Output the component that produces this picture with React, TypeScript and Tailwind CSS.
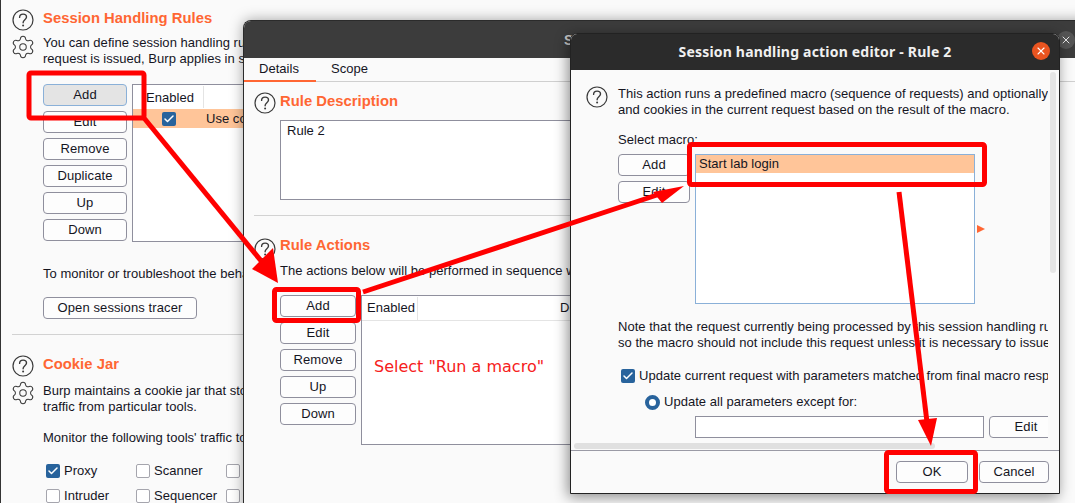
import React from "react";
import { Settings, Check, X } from "lucide-react";

function Help({ className = "" }: { className?: string }) {
  return (
    <svg width="22" height="22" viewBox="0 0 22 22" fill="none" className={`shrink-0 ${className}`}>
      <circle cx="11" cy="11" r="10" stroke="#3a3a3a" strokeWidth="1.2" />
      <path d="M7.6 8.4c0-2 1.5-3.3 3.5-3.3s3.4 1.2 3.4 3c0 2.6-3.4 2.8-3.4 5.6" stroke="#3a3a3a" strokeWidth="1.4" strokeLinecap="round" />
      <circle cx="11.1" cy="16.4" r="1" fill="#3a3a3a" />
    </svg>
  );
}

function Gear() {
  return (
    <div className="w-[21px] h-[22px] flex items-center justify-center">
      <Settings size={26} strokeWidth={0.95} color="#3a3a3a" className="shrink-0" />
    </div>
  );
}

function Btn({ children, className = "" }: { children: React.ReactNode; className?: string }) {
  return (
    <div className={`h-[22px] shrink-0 flex items-center justify-center rounded-[4px] border border-[#8f8f9d] bg-[#fdfdfd] text-[13px] tracking-[0.1px] text-[#15151f] ${className}`}>
      {children}
    </div>
  );
}

function Box({ checked = false }: { checked?: boolean }) {
  return checked ? (
    <div className="w-[14px] h-[14px] shrink-0 rounded-[2px] bg-[#28639c] flex items-center justify-center">
      <Check size={12} strokeWidth={3} color="#ffffff" />
    </div>
  ) : (
    <div className="w-[14px] h-[14px] shrink-0 rounded-[2px] border border-[#a5a5ad] bg-white" />
  );
}

function Title({ children, className = "" }: { children: React.ReactNode; className?: string }) {
  return <div className={`text-[14.8px] leading-[18px] font-bold text-[#ff6633] whitespace-nowrap ${className}`}>{children}</div>;
}

function Tool({ label, checked = false, w = "w-[90px]" }: { label: string; checked?: boolean; w?: string }) {
  return (
    <div className={`flex items-center gap-[4px] ${w}`}>
      <Box checked={checked} />
      <span className="whitespace-nowrap">{label}</span>
    </div>
  );
}

function BackPanel() {
  return (
    <div className="w-[243px] pl-[12px] pt-[9px] whitespace-nowrap text-[13px] tracking-[0.03px] leading-[16px] text-[#15151f]">
      <div className="flex gap-[10px]">
        <div className="flex flex-col gap-[5px] w-[21px]">
          <Help />
          <Gear />
        </div>
        <div className="flex flex-col">
          <Title>Session Handling Rules</Title>
          <div className="mt-[8px]">You can define session handling rules to make Burp perform</div>
          <div>request is issued, Burp applies in sequence each of the rules</div>
          <div className="flex mt-[17px] gap-[5px]">
            <div className="flex flex-col gap-[5px] w-[84px]">
              <Btn className="!bg-[#e4e4e4] !border-[#8ab0d8]">Add</Btn>
              <Btn>Edit</Btn>
              <Btn>Remove</Btn>
              <Btn>Duplicate</Btn>
              <Btn>Up</Btn>
              <Btn>Down</Btn>
            </div>
            <div className="w-[400px] h-[158px] border border-[#8f8f9d] bg-white">
              <div className="h-[24px] flex items-center pl-[13px]">
                <span className="w-[57px] pt-[2px]">Enabled</span>
                <span className="h-[22px] w-px bg-[#e4e4e4]" />
              </div>
              <div className="h-[19px] bg-[#ffc599] flex items-center pl-[29px]">
                <Box checked />
                <span className="ml-[30px]">Use cookies from Burp's cookie jar</span>
              </div>
            </div>
          </div>
          <div className="mt-[24px]">To monitor or troubleshoot the behaviour of your session handling</div>
          <Btn className="w-[154px] mt-[15px]">Open sessions tracer</Btn>
        </div>
      </div>
      <div className="h-px w-[232px] bg-[#d2d2d2] mt-[15px]" />
      <div className="flex gap-[10px] mt-[20px]">
        <div className="flex flex-col gap-[5px] w-[21px]">
          <Help />
          <Gear />
        </div>
        <div className="flex flex-col">
          <Title>Cookie Jar</Title>
          <div className="mt-[10px]">Burp maintains a cookie jar that stores all of the cookies issued by</div>
          <div>traffic from particular tools.</div>
          <div className="mt-[15px]">Monitor the following tools' traffic to update the cookie jar:</div>
          <div className="flex mt-[17px] ml-[3px]">
            <Tool label="Proxy" checked />
            <Tool label="Scanner" />
            <Tool label="Repeater" />
          </div>
          <div className="flex mt-[9px] ml-[3px]">
            <Tool label="Intruder" />
            <Tool label="Sequencer" />
            <Tool label="Extensions" />
          </div>
        </div>
      </div>
    </div>
  );
}

function RuleWindow() {
  return (
    <div className="absolute left-[243px] top-[20px] w-[900px] h-[520px] rounded-t-[8px] border-l border-t border-[#2b2b2b] bg-[#fafafa] shadow-[0_0_14px_rgba(0,0,0,0.35)] text-[13px] tracking-[0.03px] leading-[16px] text-[#15151f] whitespace-nowrap">
      <div className="h-[37px] rounded-t-[7px] bg-[#3c3c3c] flex items-center pl-[320px]">
        <span className="text-[14px] font-bold text-[#c9c9c9]">Session handling rule editor</span>
        <div className="ml-auto mr-[68px] w-[18px] h-[18px] rounded-full bg-[#555555] flex items-center justify-center">
          <X size={12} strokeWidth={2} color="#e8e8e8" />
        </div>
      </div>
      <div className="h-[24px] flex border-b border-[#cfcfcf]">
        <div className="w-[72px] h-[24px] border-b-2 border-[#ff6633] pl-[15px] pt-[3px]">Details</div>
        <div className="pl-[15px] pt-[3px]">Scope</div>
      </div>
      <div className="pl-[10px] flex gap-[4px] mt-[11px]">
        <Help className="mt-[-1px]" />
        <div className="flex flex-col">
          <Title className="mt-[-1px]">Rule Description</Title>
          <div className="w-[500px] h-[80px] mt-[10px] border border-[#8f8f9d] bg-white pl-[6px] pt-[2px]">Rule 2</div>
        </div>
      </div>
      <div className="ml-[10px] h-px w-[800px] bg-[#d2d2d2] mt-[15px]" />
      <div className="pl-[10px] flex gap-[4px] mt-[20px]">
        <Help className="mt-[2px]" />
        <div className="flex flex-col">
          <Title>Rule Actions</Title>
          <div className="mt-[9px]">The actions below will be performed in sequence when this rule is applied</div>
          <div className="flex gap-[5px] mt-[16px]">
            <div className="flex flex-col gap-[5px] w-[76px]">
              <Btn>Add</Btn>
              <Btn>Edit</Btn>
              <Btn>Remove</Btn>
              <Btn>Up</Btn>
              <Btn>Down</Btn>
            </div>
            <div className="relative w-[500px] h-[150px] border border-[#8f8f9d] bg-white">
              <div className="h-[25px] flex items-center pl-[5px] border-b border-[#e4e4e4]">
                <span className="w-[50px]">Enabled</span>
                <span className="h-[23px] w-px bg-[#e4e4e4]" />
                <span className="ml-[142px]">Description</span>
              </div>
              <div className="mt-[36px] ml-[12px] text-[16px] tracking-normal leading-[19px] text-[#f62020] font-['DejaVu_Sans',sans-serif]">Select "Run a macro"</div>
            </div>
          </div>
        </div>
      </div>
    </div>
  );
}

function ActionWindow() {
  return (
    <div className="absolute left-[570px] top-[33px] w-[490px] h-[461px] rounded-t-[7px] border border-[#222222] bg-[#fafafa] shadow-[-2px_3px_14px_rgba(0,0,0,0.45)] flex flex-col text-[13px] tracking-[0.03px] leading-[16px] text-[#15151f] whitespace-nowrap">
      <div className="relative h-[36px] shrink-0 rounded-t-[6px] bg-[#2b2b2b] flex items-center justify-center">
        <span className="text-[14px] font-bold tracking-[0.2px] text-[#f0f0f0] font-['Noto_Sans',sans-serif]">Session handling action editor - Rule 2</span>
        <div className="absolute right-[9px] top-[8px] w-[18px] h-[18px] rounded-full bg-[#e95420] flex items-center justify-center">
          <X size={12} strokeWidth={2.2} color="#ffffff" />
        </div>
      </div>
      <div className="relative h-[380px] shrink-0 overflow-hidden">
        <div className="absolute right-[3px] top-[2px] w-[6px] h-[201px] rounded-[3px] bg-[#e6e6e6]" />
        <div className="absolute left-[3px] bottom-[1px] w-[361px] h-[6px] rounded-[3px] bg-[#e0e0e0]" />
        <div className="w-[477px] overflow-hidden pt-[16px] pl-[15px]">
          <div className="flex gap-[10px]">
            <Help />
            <div className="flex flex-col">
              <div>This action runs a predefined macro (sequence of requests) and optionally update parameters</div>
              <div>and cookies in the current request based on the result of the macro.</div>
              <div className="mt-[14px]">Select macro:</div>
              <div className="flex gap-[5px] mt-[6px] relative">
                <div className="flex flex-col gap-[5px] w-[72px]">
                  <Btn>Add</Btn>
                  <Btn>Edit</Btn>
                </div>
                <div className="w-[280px] h-[150px] border border-[#8ab0d8] bg-white">
                  <div className="h-[18px] bg-[#ffc599] pl-[3px] flex items-center">Start lab login</div>
                </div>
                <div className="self-center ml-[-3px] w-0 h-0 border-y-[4px] border-y-transparent border-l-[8px] border-l-[#ff6633]" />
              </div>
              <div className="mt-[15px]">Note that the request currently being processed by this session handling rule will be issued,</div>
              <div>so the macro should not include this request unless it is necessary to issue it again</div>
              <div className="flex items-center gap-[4px] mt-[17px] ml-[3px]">
                <Box checked />
                <span>Update current request with parameters matched from final macro response</span>
              </div>
              <div className="flex items-center gap-[4px] mt-[10px] ml-[27px]">
                <div className="w-[15px] h-[15px] rounded-full border-[4px] border-[#28639c] bg-white" />
                <span>Update all parameters except for:</span>
              </div>
              <div className="flex gap-[5px] mt-[6px] ml-[77px]">
                <div className="w-[289px] h-[22px] shrink-0 border border-[#8f8f9d] bg-white" />
                <Btn className="w-[74px]">Edit</Btn>
              </div>
            </div>
          </div>
        </div>
      </div>
      <div className="flex-1 border-t border-[#9a9aa5] flex items-center justify-end pr-[10px] gap-[11px]">
        <Btn className="w-[72px]">OK</Btn>
        <Btn className="w-[70px]">Cancel</Btn>
      </div>
    </div>
  );
}

function Annotations() {
  const red = "#ff0000";
  return (
    <svg className="absolute inset-0" width="1075" height="503" viewBox="0 0 1075 503" fill="none">
      <g stroke={red} strokeWidth="5" strokeLinejoin="round">
        <rect x="29" y="73" width="115" height="45" rx="2" />
        <rect x="274.5" y="289.5" width="84" height="31" rx="2" />
        <rect x="689.5" y="144.5" width="295" height="40" rx="2" />
        <rect x="886.5" y="452.5" width="89" height="39" rx="2" />
      </g>
      <g stroke={red} strokeWidth="5">
        <line x1="144" y1="118" x2="262" y2="262" />
        <line x1="363" y1="292" x2="660" y2="194" />
        <line x1="899" y1="192" x2="927" y2="422" />
      </g>
      <g fill={red}>
        <polygon points="278,283 252,269 273,248" />
        <polygon points="684,186 653,192 662,203" />
        <polygon points="931,446 918,420 937,418" />
      </g>
    </svg>
  );
}

export default function App() {
  return (
    <div className="relative w-[1075px] h-[503px] overflow-hidden bg-[#fafafa] font-['Liberation_Sans',Arial,sans-serif] shadow-[inset_1px_0_0_#333333]">
      <BackPanel />
      <RuleWindow />
      <ActionWindow />
      <Annotations />
    </div>
  );
}
